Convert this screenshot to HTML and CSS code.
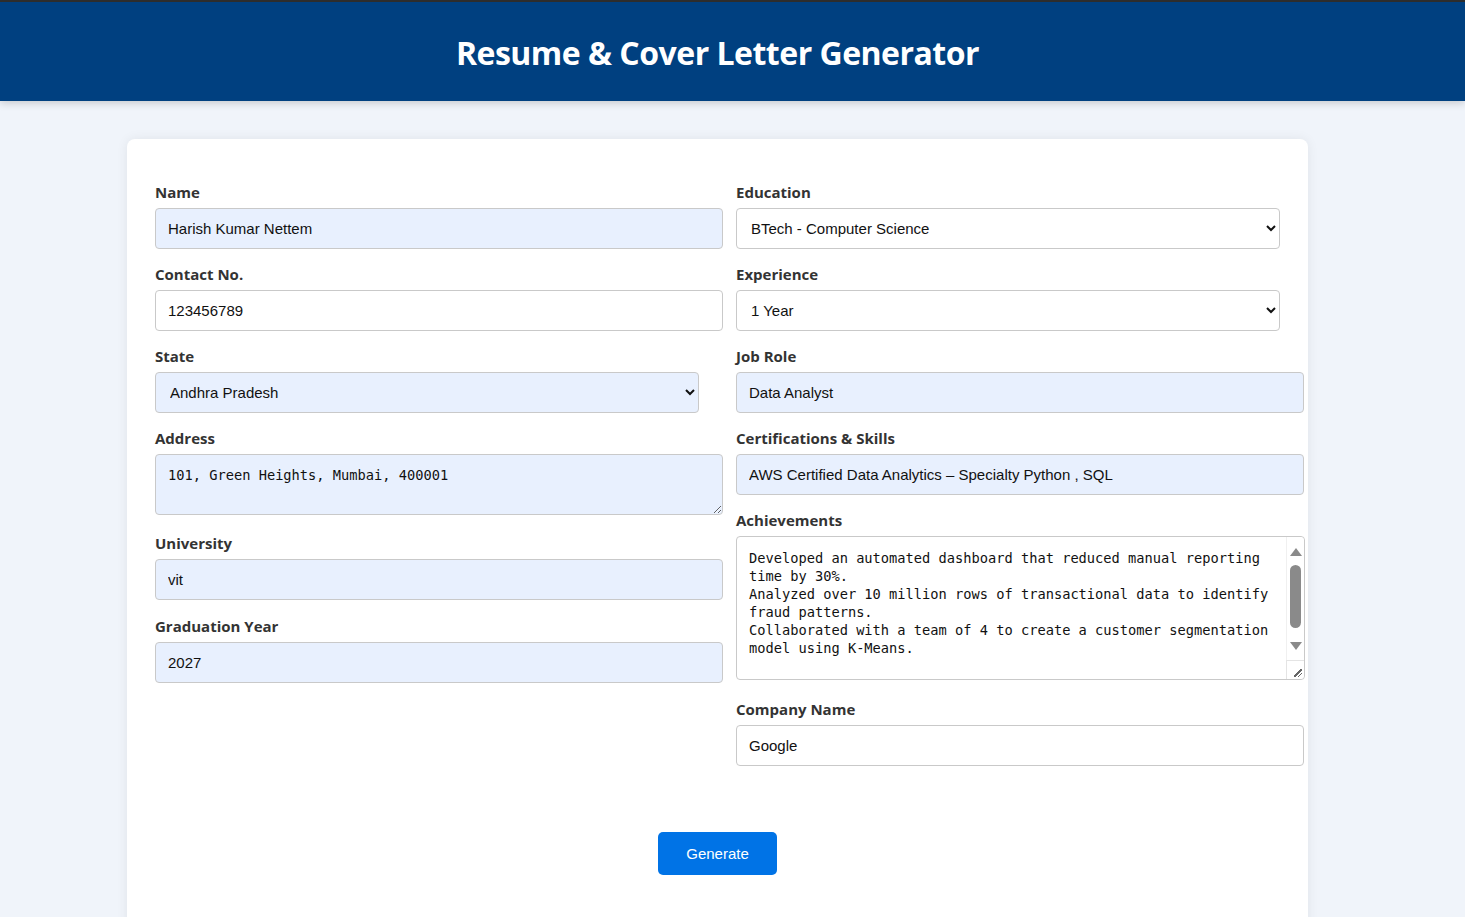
FILE: index.html
```html
<!DOCTYPE html>
<html lang="en">
<head>
<meta charset="utf-8">
<title>Resume &amp; Cover Letter Generator</title>
<link rel="stylesheet" href="styles.css">
</head>
<body>
<header class="topbar">
  <h1 class="title">Resume &amp; Cover Letter Generator</h1>
</header>
<main class="page">
  <form class="card">
    <div class="grid">
      <div class="col">
        <div class="field">
          <label class="label">Name</label>
          <input class="input filled" type="text" value="Harish Kumar Nettem">
        </div>
        <div class="field">
          <label class="label">Contact No.</label>
          <input class="input" type="text" value="123456789">
        </div>
        <div class="field">
          <label class="label">State</label>
          <select class="select filled"><option>Andhra Pradesh</option></select>
        </div>
        <div class="field field-area">
          <label class="label">Address</label>
          <textarea class="area filled address">101, Green Heights, Mumbai, 400001</textarea>
        </div>
        <div class="field field-uni">
          <label class="label">University</label>
          <input class="input filled" type="text" value="vit">
        </div>
        <div class="field">
          <label class="label">Graduation Year</label>
          <input class="input filled" type="text" value="2027">
        </div>
      </div>
      <div class="col">
        <div class="field">
          <label class="label">Education</label>
          <select class="select"><option>BTech - Computer Science</option></select>
        </div>
        <div class="field">
          <label class="label">Experience</label>
          <select class="select"><option>1 Year</option></select>
        </div>
        <div class="field">
          <label class="label">Job Role</label>
          <input class="input filled" type="text" value="Data Analyst">
        </div>
        <div class="field">
          <label class="label">Certifications &amp; Skills</label>
          <input class="input filled" type="text" value="AWS Certified Data Analytics – Specialty Python , SQL">
        </div>
        <div class="field field-area2">
          <label class="label">Achievements</label>
          <div class="area-wrap">
            <textarea class="area achievements">Developed an automated dashboard that reduced manual reporting time by 30%.
Analyzed over 10 million rows of transactional data to identify fraud patterns.
Collaborated with a team of 4 to create a customer segmentation model using K-Means.</textarea>
            <div class="fake-scroll" aria-hidden="true">
              <span class="arrow-up"></span>
              <span class="track"><span class="thumb"></span></span>
              <span class="arrow-down"></span>
              <span class="corner"></span>
            </div>
          </div>
        </div>
        <div class="field">
          <label class="label">Company Name</label>
          <input class="input" type="text" value="Google">
        </div>
      </div>
    </div>
    <div class="actions">
      <button class="btn" type="button">Generate</button>
    </div>
  </form>
</main>
</body>
</html>
```

FILE: styles.css
```css
html, body {
  margin: 0;
  padding: 0;
}

body {
  background: #f0f4fa;
  font-family: "Liberation Sans", Arial, sans-serif;
  color: #222;
  height: 917px;
  overflow: hidden;
}

.topbar {
  background: #004080;
  border-top: 2px solid #2d2d2d;
  height: 99px;
  padding-right: 30px;
  display: flex;
  align-items: center;
  justify-content: center;
  box-shadow: 0 2px 8px rgba(0, 0, 0, 0.18);
  position: relative;
  z-index: 1;
}

.title {
  margin: 0;
  color: #fff;
  font-family: "Open Sans", "Noto Sans", sans-serif;
  font-weight: 700;
  font-size: 32px;
  letter-spacing: -0.5px;
  line-height: 1;
  padding-top: 2px;
}

.page {
  padding-top: 38px;
  padding-right: 30px;
  display: flex;
  justify-content: center;
}

.card {
  width: 1125px;
  background: #fff;
  border-radius: 8px;
  box-shadow: 0 0 12px rgba(0, 0, 0, 0.07);
  padding: 43px 28px 60px;
}

.grid {
  display: grid;
  grid-template-columns: 544px 544px;
  column-gap: 37px;
  align-items: start;
}

.col {
  display: flex;
  flex-direction: column;
}

.field {
  margin-bottom: 15px;
}

.field-area {
  margin-bottom: 18px;
}

.field-uni {
  margin-bottom: 16px;
}

.field-area2 {
  margin-bottom: 19px;
}

.label {
  display: block;
  font-family: "Open Sans", "Noto Sans", sans-serif;
  font-weight: 700;
  font-size: 15px;
  line-height: 20px;
  color: #333;
  margin-bottom: 6px;
}

.input,
.area {
  display: block;
  box-sizing: border-box;
  width: 568px;
  border: 1px solid #c9c9c9;
  border-radius: 4px;
  background: #fff;
  color: #111;
  padding: 0 12px;
  margin: 0;
  outline: none;
}

.input {
  height: 41px;
  font-family: "Liberation Sans", Arial, sans-serif;
  font-size: 15px;
}

.select {
  display: block;
  box-sizing: border-box;
  width: 544px;
  height: 41px;
  border: 1px solid #c9c9c9;
  border-radius: 4px;
  background-color: #fff;
  color: #111;
  font-family: "Liberation Sans", Arial, sans-serif;
  font-size: 15px;
  padding: 0 10px;
  margin: 0;
}

.filled {
  background-color: #e8f0fe;
}

.area {
  font-family: "DejaVu Sans Mono", "Liberation Mono", monospace;
  font-size: 13.7px;
  line-height: 18px;
  padding: 12px 12px;
  resize: vertical;
}

.address {
  height: 61px;
  padding-top: 11px;
}

.area-wrap {
  position: relative;
  width: 569px;
}

.achievements {
  width: 569px;
  height: 144px;
  overflow: hidden;
  resize: none;
  padding: 12px 30px 12px 12px;
}

.fake-scroll {
  position: absolute;
  top: 1px;
  right: 1px;
  bottom: 1px;
  width: 17px;
  display: flex;
  flex-direction: column;
  align-items: center;
  background: #fff;
  border-left: 1px solid #f0f0f0;
  border-radius: 0 4px 4px 0;
}

.arrow-up {
  margin-top: 11px;
  width: 0;
  height: 0;
  border-left: 6px solid transparent;
  border-right: 6px solid transparent;
  border-bottom: 8px solid #8a8a8a;
}

.track {
  flex: 1;
  width: 100%;
  display: flex;
  justify-content: center;
  padding-top: 9px;
  box-sizing: border-box;
}

.thumb {
  width: 11px;
  height: 63px;
  border-radius: 6px;
  background: #8a8a8a;
}

.arrow-down {
  width: 0;
  height: 0;
  border-left: 6px solid transparent;
  border-right: 6px solid transparent;
  border-top: 8px solid #8a8a8a;
  margin-bottom: 10px;
}

.corner {
  width: 18px;
  height: 19px;
  box-sizing: border-box;
  border-top: 1px solid #e4e4e4;
  border-left: 1px solid #e4e4e4;
  margin-left: -1px;
  background:
    linear-gradient(135deg, transparent 42%, #666 42%, #666 58%, transparent 58%) right 2px bottom 2px / 8px 8px no-repeat,
    linear-gradient(135deg, transparent 38%, #666 38%, #666 62%, transparent 62%) right 2px bottom 2px / 4px 4px no-repeat;
}

.actions {
  display: flex;
  justify-content: center;
  padding-top: 51px;
}

.btn {
  width: 119px;
  height: 43px;
  border: none;
  border-radius: 5px;
  background: #0073e6;
  color: #fff;
  font-family: "Liberation Sans", Arial, sans-serif;
  font-size: 15px;
  cursor: pointer;
}
```
